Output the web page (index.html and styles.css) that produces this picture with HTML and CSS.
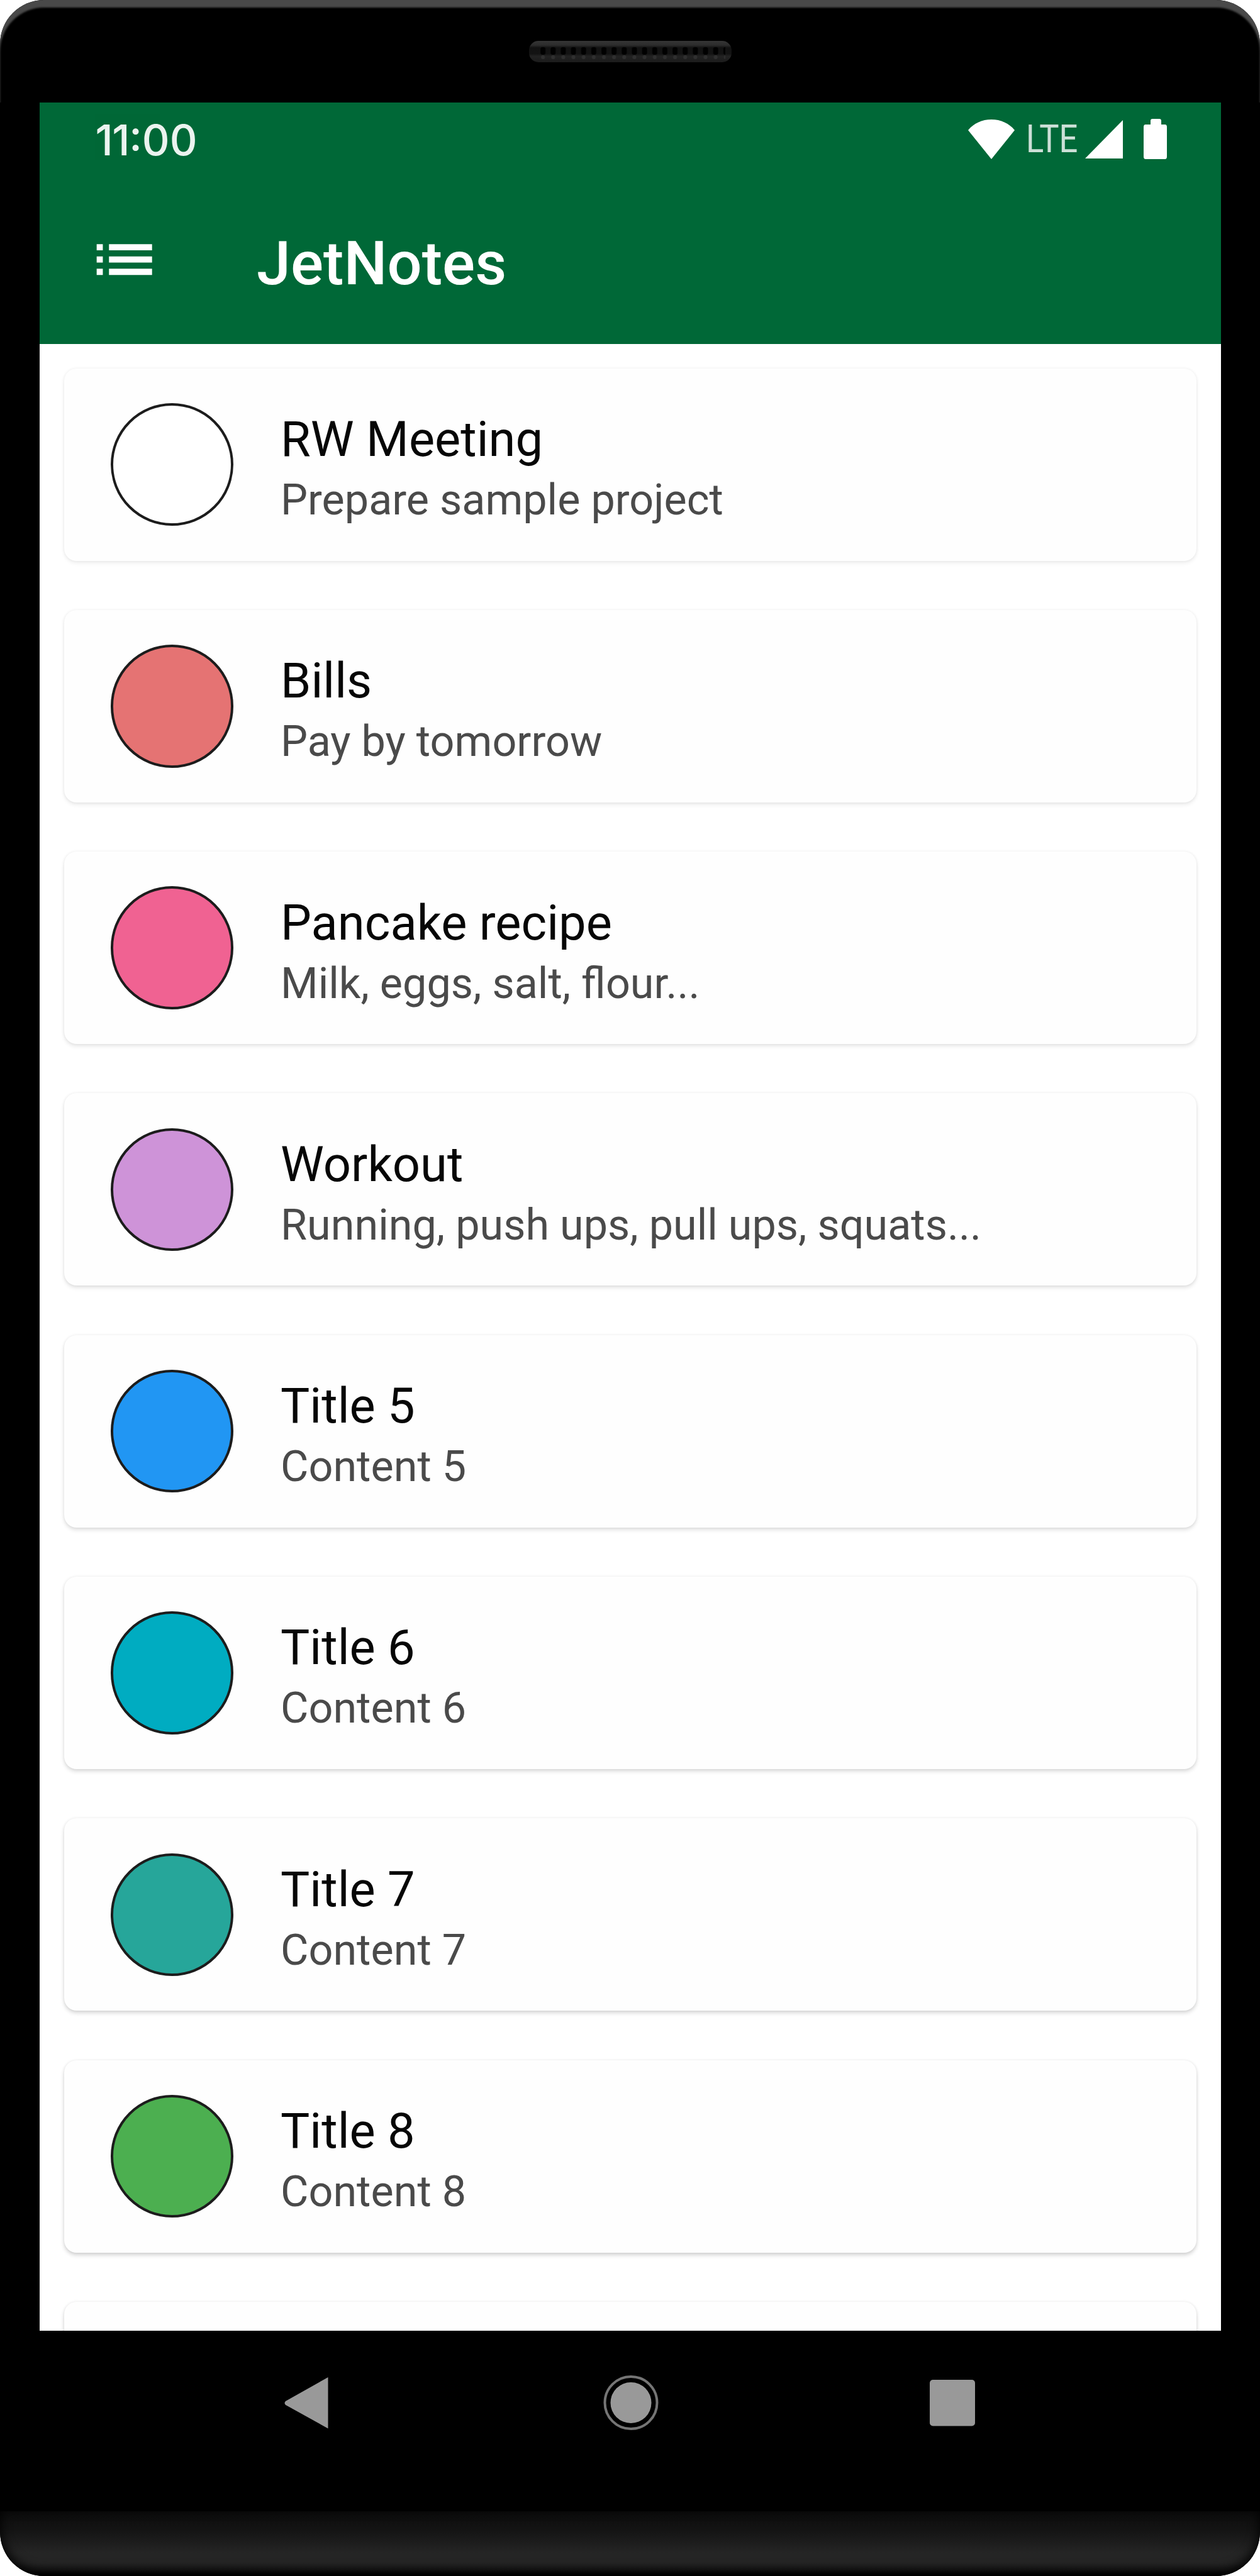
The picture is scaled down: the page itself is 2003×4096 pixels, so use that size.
FILE: index.html
```html
<!DOCTYPE html>
<html lang="en">
<head>
<meta charset="utf-8">
<title>JetNotes</title>
<link rel="stylesheet" href="styles.css">
</head>
<body>
<div class="phone">
  <div class="bezel-top">
    <svg class="speaker" viewBox="0 0 324 36">
      <defs>
        <linearGradient id="grille" x1="0" y1="0" x2="0" y2="1">
          <stop offset="0" stop-color="#353535"/><stop offset=".2" stop-color="#2c2c2c"/><stop offset=".32" stop-color="#121212"/><stop offset=".6" stop-color="#131313"/><stop offset=".72" stop-color="#222"/><stop offset="1" stop-color="#1c1c1c"/>
        </linearGradient>
        <pattern id="holes" width="16.15" height="36" patternUnits="userSpaceOnUse">
          <rect x="3" y="11" width="8" height="12" rx="3" fill="#010101"/><circle cx="7" cy="27" r="3" fill="#303030"/>
        </pattern>
      </defs>
      <rect x="1" y="1" width="322" height="34" rx="15" fill="url(#grille)"/>
      <rect x="13" y="0" width="300" height="36" fill="url(#holes)"/>
    </svg>
  </div>
  <div class="screen">
    <header class="header">
      <div class="status">
        <span class="clock"><span class="ones">11</span>:00</span>
        <div class="indicators">
          <svg class="wifi" viewBox="0 0 74 63"><path d="M37 0C22 0 9 6 0 17L37 63 74 17C65 6 52 0 37 0Z"/></svg>
          <span class="network">LTE</span>
          <svg class="signal" viewBox="0 0 60 61"><path d="M60 0V61H0Z"/></svg>
          <svg class="battery" viewBox="0 0 37 64"><path d="M11 3Q11 0 14 0H25Q28 0 28 3V9H34Q37 9 37 13V60Q37 64 34 64H3Q0 64 0 60V13Q0 9 3 9H11Z"/></svg>
        </div>
      </div>
      <div class="appbar">
        <svg class="menu" viewBox="0 0 24 24"><path d="M3 13h2v-2H3v2zm0 4h2v-2H3v2zm0-8h2V7H3v2zm4 4h14v-2H7v2zm0 4h14v-2H7v2zM7 7v2h14V7H7z"/></svg>
        <h1 class="title">JetNotes</h1>
      </div>
    </header>
    <main class="notes">
      <article class="note" style="--shade:.055"><span class="dot" style="background:#fff"></span><div class="text"><h2>RW Meeting</h2><p>Prepare sample project</p></div></article>
      <article class="note" style="--shade:.07"><span class="dot" style="background:#e57373"></span><div class="text"><h2>Bills</h2><p>Pay by tomorrow</p></div></article>
      <article class="note" style="--shade:.085"><span class="dot" style="background:#f06292"></span><div class="text"><h2>Pancake recipe</h2><p>Milk, eggs, salt, flour...</p></div></article>
      <article class="note" style="--shade:.1"><span class="dot" style="background:#ce93d8"></span><div class="text"><h2>Workout</h2><p>Running, push ups, pull ups, squats...</p></div></article>
      <article class="note" style="--shade:.115"><span class="dot" style="background:#2196f3"></span><div class="text"><h2>Title 5</h2><p>Content 5</p></div></article>
      <article class="note" style="--shade:.13"><span class="dot" style="background:#00acc1"></span><div class="text"><h2>Title 6</h2><p>Content 6</p></div></article>
      <article class="note" style="--shade:.145"><span class="dot" style="background:#26a69a"></span><div class="text"><h2>Title 7</h2><p>Content 7</p></div></article>
      <article class="note" style="--shade:.16"><span class="dot" style="background:#4caf50"></span><div class="text"><h2>Title 8</h2><p>Content 8</p></div></article>
      <article class="note" style="--shade:.16"></article>
    </main>
  </div>
  <nav class="navbar">
    <svg viewBox="0 0 100 100"><path d="M80.5 9V90.500L13 53Q10 50 13 47Z"/></svg>
    <svg viewBox="0 0 100 100"><circle cx="51" cy="49.500" r="32.500"/><circle class="ring" cx="51" cy="49.500" r="41.500"/></svg>
    <svg viewBox="0 0 100 100"><rect x="15" y="13" width="72" height="73.500" rx="5"/></svg>
  </nav>
  <div class="chin"></div>
</div>
</body>
</html>
```
FILE: styles.css
```css
* { box-sizing: border-box; margin: 0; padding: 0; }
html, body { width: 2003px; height: 4096px; overflow: hidden; background: #fff; }
body { font-family: Roboto, "Noto Sans", sans-serif; }

.phone {
  width: 2003px;
  height: 4096px;
  display: flex;
  flex-direction: column;
  background: #000;
  border-radius: 70px;
  overflow: hidden;
}
.bezel-top {
  height: 162.5px;
  flex: none;
  display: flex;
  justify-content: center;
  padding-top: 64px;
  border-radius: 70px 70px 0 0;
  box-shadow: inset 0 12px 3px #494949;
}
.speaker { width: 324px; height: 36px; }

.screen {
  height: 3543px;
  flex: none;
  margin: 0 62.5px;
  background: #fff;
  overflow: hidden;
}
.header { height: 384px; background: #006837; color: #fff; }
.status {
  height: 117px;
  display: flex;
  align-items: center;
  justify-content: space-between;
  padding: 0 86px 0 89px;
}
.clock { font: 500 68px/80px Inter, sans-serif; letter-spacing: 0; opacity: .92; padding-top: 2px; }
.ones { letter-spacing: -1.4px; }
.indicators { display: flex; align-items: center; }
.indicators svg, .menu { fill: #fff; }
.wifi { width: 74px; height: 63px; }
.network {
  width: 82px;
  margin-left: 18px;
  font-size: 61px;
  line-height: 61px;
  font-weight: 400;
  transform: scaleX(.86);
  transform-origin: 0 50%;
  opacity: .8;
}
.signal { width: 60px; height: 61px; margin-left: 12px; }
.battery { width: 37px; height: 64px; margin-left: 33px; }

.appbar { height: 267px; display: flex; align-items: flex-start; padding: 74px 0 0 76px; }
.menu { width: 117.4px; height: 117.4px; }
.title { margin-left: 152px; font-size: 97.3px; line-height: 130px; font-weight: 500; }

.notes { padding: 39px 39px 0; display: flex; flex-direction: column; gap: 78.3px; }
.note {
  height: 306px;
  flex: none;
  display: flex;
  align-items: center;
  gap: 75px;
  padding-left: 74px;
  border-radius: 20px;
  background: #fefefe;
  box-shadow: 0 0 5px rgba(0, 0, 0, .07), 0 4px 6px rgba(0, 0, 0, var(--shade));
}
.dot { width: 195.5px; height: 195.5px; border: 4px solid #1c1c1c; border-radius: 50%; }
.text { padding-top: 17px; }
.note h2 { font-size: 77.7px; line-height: 96px; font-weight: 400; color: #060606; }
.note p { font-size: 68.3px; line-height: 96px; color: #4a4a4a; }

.navbar {
  height: 287px;
  flex: none;
  display: flex;
  justify-content: center;
  gap: 411px;
  padding-top: 65.5px;
}
.navbar svg { width: 100px; height: 100px; fill: #999; }
.navbar .ring { fill: none; stroke: #757575; stroke-width: 4; }
.chin {
  flex: 1;
  border-radius: 0 0 70px 70px;
  background: linear-gradient(#0b0b0b, #141414 30%, #252525 65%, #252525 80%, #181818 92%, #000);
  box-shadow: inset 0 -6px 18px #000;
}
```
